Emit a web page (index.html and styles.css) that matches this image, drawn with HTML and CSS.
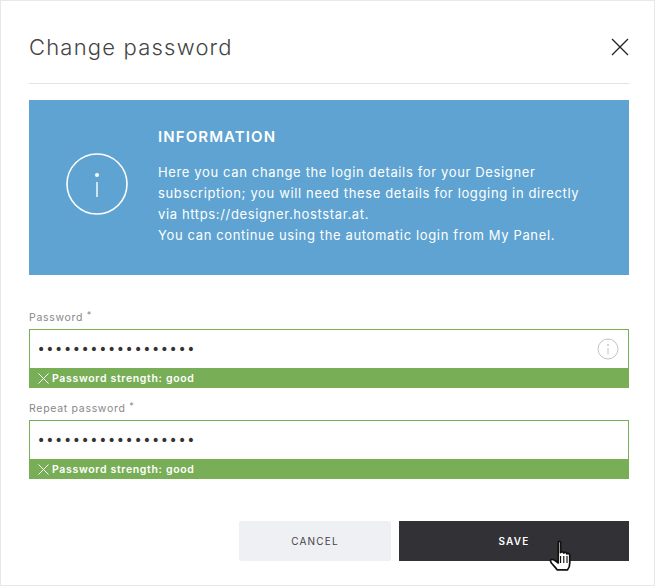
FILE: index.html
```html
<!DOCTYPE html>
<html lang="en">
<head>
  <meta charset="UTF-8" />
  <title>Change password</title>
  <link rel="stylesheet" href="styles.css">
</head>
<body>
  <div class="modal">
    <div class="modal-head">
      <h1>Change password</h1>
      <svg class="close" width="18" height="18" viewBox="0 0 18 18"><path d="M1 1L17 17M17 1L1 17" stroke="#222" stroke-width="1.3" fill="none"/></svg>
    </div>

    <div class="info">
      <div class="info-icon">
        <svg width="62" height="62" viewBox="0 0 62 62"><circle cx="31" cy="31" r="30" stroke="#fff" stroke-width="1.6" fill="none"/><circle cx="31" cy="22" r="2" fill="#fff"/><path d="M31 29V44" stroke="#fff" stroke-width="1.4"/></svg>
      </div>
      <div class="info-text">
        <h2>INFORMATION</h2>
        <p>Here you can change the login details for your Designer<br>subscription; you will need these details for logging in directly<br>via https://designer.hoststar.at.<br>You can continue using the automatic login from My Panel.</p>
      </div>
    </div>

    <form class="fields">
      <label class="label">Password <sup>*</sup></label>
      <div class="input-box">
        <input type="password" value="aaaaaaaaaaaaaaaaaa" />
        <svg class="hint" width="22" height="22" viewBox="0 0 22 22"><circle cx="11" cy="11" r="10" stroke="#c4c4c4" stroke-width="1" fill="none"/><circle cx="11" cy="7" r="1" fill="#c4c4c4"/><path d="M11 10V16.500" stroke="#c4c4c4" stroke-width="1"/></svg>
      </div>
      <div class="strength">
        <svg width="11" height="11" viewBox="0 0 11 11"><path d="M.5 .5L10.500 10.500M10.500 .5L.5 10.500" stroke="#fff" stroke-width="1" fill="none"/></svg>
        Password strength: good
      </div>

      <label class="label">Repeat password <sup>*</sup></label>
      <div class="input-box">
        <input type="password" value="aaaaaaaaaaaaaaaaaa" />
      </div>
      <div class="strength">
        <svg width="11" height="11" viewBox="0 0 11 11"><path d="M.5 .5L10.500 10.500M10.500 .5L.5 10.500" stroke="#fff" stroke-width="1" fill="none"/></svg>
        Password strength: good
      </div>
    </form>

    <div class="buttons">
      <button class="btn btn-cancel" type="button">CANCEL</button>
      <button class="btn btn-save" type="button">SAVE
        <svg class="cursor" width="22" height="31" viewBox="0 0 19 27"><path d="M8 2C8 .8 10 .8 10 2V11C10.500 10 12.500 10 12.800 11.500C13.300 10.500 15.300 10.500 15.600 12.200C16.200 11.400 18 11.700 18 13.500V20C18 23 17 25 16 26H7C6.500 25 4.500 23 2 20C1 18.500 1 17.500 2 17C3.500 16.500 5.500 18 8 20Z" fill="#fff" stroke="#111" stroke-width="1.500" stroke-linejoin="round"/><path d="M10 14V20M12.800 14V20M15.600 14V20" stroke="#111" stroke-width="1"/></svg>
      </button>
    </div>
  </div>
</body>
</html>
```

FILE: styles.css
```css
* { box-sizing: border-box; }
body {
  margin: 0;
  background: #fff;
  font-family: 'Inter', 'Liberation Sans', sans-serif;
}
.modal {
  width: 655px;
  height: 586px;
  border: 1px solid #e8e8e8;
  padding: 0 25px 0 28px;
}
.modal-head {
  height: 83px;
  display: flex;
  align-items: center;
  justify-content: space-between;
  border-bottom: 1px solid #e3e3e3;
  padding-top: 10px;
}
.modal-head h1 {
  margin: 0;
  font-size: 22px;
  font-weight: 300;
  letter-spacing: 1.2px;
  color: #444;
}
.info {
  margin-top: 16px;
  height: 175px;
  background: #5ea3d1;
  color: #fff;
  display: flex;
  align-items: center;
}
.info-icon {
  margin-left: 37px;
  width: 92px;
  display: flex;
  padding-bottom: 8px;
}
.info-text h2 {
  margin: 0 0 17px;
  font-size: 15px;
  line-height: 17px;
  font-weight: 600;
  letter-spacing: 1.100px;
}
.info-text p {
  margin: 0 0 2px;
  font-size: 13px;
  line-height: 21px;
  letter-spacing: .64px;
}
.fields {
  margin-top: 35px;
}
.label {
  display: block;
  height: 19px;
  font-size: 10.500px;
  line-height: 15px;
  letter-spacing: .7px;
  color: #888;
}
.label sup {
  font-size: 9px;
  line-height: 0;
  vertical-align: 3px;
}
.input-box {
  height: 39px;
  border: 1px solid #78ae55;
  border-bottom: 0;
  position: relative;
  display: flex;
  align-items: center;
  padding-right: 9px;
}
.input-box input {
  flex: 1;
  min-width: 0;
  border: none;
  outline: none;
  padding: 0 0 0 7px;
  background: none;
  font-size: 14px;
  letter-spacing: .55px;
  color: #333;
  font-family: 'DejaVu Sans', sans-serif;
}
.strength {
  height: 20px;
  margin-bottom: 13px;
  background: #78ae55;
  color: #fff;
  font-size: 10.500px;
  font-weight: 600;
  letter-spacing: .67px;
  display: flex;
  align-items: center;
  gap: 3px;
  padding-left: 9px;
}
.buttons {
  margin-top: 42px;
  display: flex;
  justify-content: flex-end;
  gap: 8px;
}
.btn {
  height: 40px;
  border: none;
  font-family: inherit;
  font-size: 10px;
  letter-spacing: 1.200px;
}
.btn-cancel {
  width: 152px;
  background: #eff0f4;
  color: #444;
  border-radius: 2px;
}
.btn-save {
  width: 230px;
  background: #313136;
  color: #fff;
  font-weight: 600;
  position: relative;
  padding-right: 6px;
}
.cursor {
  position: absolute;
  left: 150px;
  top: 19px;
}
```
